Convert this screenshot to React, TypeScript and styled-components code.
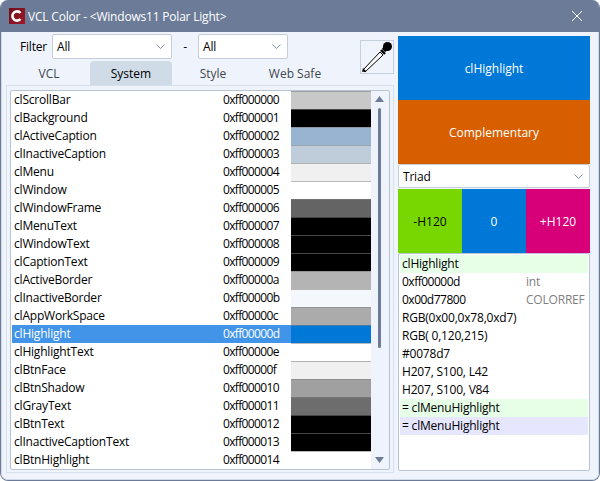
import React from "react";
import styled, { createGlobalStyle } from "styled-components";

const GlobalStyle = createGlobalStyle`
  html, body {
    margin: 0;
    padding: 0;
    background: #ffffff;
  }
  body {
    font-family: "Open Sans", "Noto Sans", sans-serif;
    font-size: 12px;
    letter-spacing: -0.2px;
    color: #000000;
  }
`;

const Window = styled.div`
  width: 600px;
  height: 481px;
  box-sizing: border-box;
  display: flex;
  flex-direction: column;
  background: #eff4fc;
  border: 1px solid #6b7b98;
  border-top: none;
  border-radius: 8px;
  overflow: hidden;
`;

const TitleBar = styled.div`
  height: 32px;
  flex: none;
  display: flex;
  align-items: center;
  padding: 0 8px;
  background: #6b7b98;
  color: #ffffff;
`;

const TitleText = styled.div`
  margin-left: 3px;
  flex: 1;
`;

const AppIcon = styled.div`
  width: 16px;
  height: 16px;
  display: flex;
  align-items: center;
  justify-content: center;
  background: linear-gradient(135deg, #6e0f1a, #a01828);
`;

const CloseIcon = styled.svg`
  width: 10px;
  height: 10px;
  margin-right: 9px;
`;

const Body = styled.div`
  flex: 1;
  min-height: 0;
  display: flex;
  gap: 4px;
  padding: 2px 8px 6px 4px;
  border: 1px solid #d0dae6;
  border-top: none;
  border-radius: 0 0 6px 6px;
`;

const LeftColumn = styled.div`
  width: 388px;
  display: flex;
  flex-direction: column;
`;

const TopArea = styled.div`
  display: flex;
  justify-content: space-between;
  height: 51px;
  flex: none;
`;

const Filters = styled.div`
  display: flex;
  flex-direction: column;
  gap: 2px;
`;

const FilterRow = styled.div`
  display: flex;
  align-items: center;
  height: 25px;
`;

const FilterLabel = styled.span`
  width: 32px;
  margin-left: 14px;
`;

const Dash = styled.span`
  width: 26px;
  text-align: center;
`;

const Select = styled.div<{ $width?: number }>`
  box-sizing: border-box;
  width: ${({ $width }) => ($width ? `${$width}px` : "100%")};
  height: ${({ $width }) => ($width ? 25 : 24)}px;
  flex: none;
  display: flex;
  align-items: center;
  justify-content: space-between;
  padding: 0 6px 0 4px;
  background: #ffffff;
  border: 1px solid #c4ceda;
  border-radius: 2px;
`;

const Tabs = styled.div`
  display: flex;
  margin-left: 2px;
`;

const Tab = styled.div<{ $active?: boolean }>`
  width: 82px;
  height: 24px;
  display: flex;
  align-items: center;
  justify-content: center;
  letter-spacing: 0;
  color: ${({ $active }) => ($active ? "#000000" : "#40464f")};
  background: ${({ $active }) => ($active ? "#cfdbe6" : "transparent")};
  border-radius: 4px 4px 0 0;
`;

const DropperButton = styled.div`
  box-sizing: border-box;
  width: 34px;
  height: 34px;
  margin-top: 6px;
  background: #eff4fc;
  border: 1px solid #c4d0dc;
`;

const ListPanel = styled.div`
  flex: 1;
  min-height: 0;
  display: flex;
  padding: 4px 3px 2px;
  border: 1px solid #d7e1ec;
`;

const ColorList = styled.div`
  flex: 1;
  display: flex;
  padding-left: 1px;
  background: #ffffff;
  border: 1px solid #b8c4d4;
  border-radius: 2px;
  overflow: hidden;
`;

const Rows = styled.div`
  width: 359px;
  flex: none;
`;

const Row = styled.div<{ $selected?: boolean }>`
  height: 18px;
  display: flex;
  padding-left: 2px;
  line-height: 17px;
  color: ${({ $selected }) => ($selected ? "#ffffff" : "#000000")};
  background: ${({ $selected }) => ($selected ? "#4294e8" : "transparent")};
`;

const RowName = styled.span`
  width: 209px;
  flex: none;
`;

const RowValue = styled.span`
  width: 68px;
  flex: none;
  letter-spacing: -0.65px;
`;

const Swatch = styled.span<{ $color: string }>`
  width: 80px;
  flex: none;
  box-sizing: border-box;
  background: ${({ $color }) => $color};
  border-top: 1px solid rgba(128, 128, 128, 0.55);
`;

const ScrollTrack = styled.div`
  flex: 1;
  display: flex;
  flex-direction: column;
  align-items: center;
  padding: 5px 1px 0 0;
  background: #eff4fc;
`;

const ScrollThumb = styled.div`
  width: 3px;
  height: 240px;
  margin: 6px 0 109px;
  border-radius: 2px;
  background: #6b7b98;
`;

const RightColumn = styled.div`
  width: 192px;
  display: flex;
  flex-direction: column;
  margin-top: 2px;
  margin-bottom: 2px;
`;

const ColorBlock = styled.div<{ $bg: string; $dark?: boolean }>`
  height: 64px;
  flex: none;
  display: flex;
  align-items: center;
  justify-content: center;
  letter-spacing: 0;
  color: ${({ $dark }) => ($dark ? "#000000" : "#ffffff")};
  background: ${({ $bg }) => $bg};
`;

const TriadRow = styled.div`
  display: flex;
  margin-top: 1px;
  & > * {
    flex: 0 0 64px;
  }
`;

const InfoList = styled.div`
  flex: 1;
  padding: 1px;
  background: #ffffff;
  border: 1px solid #b8c4d4;
  border-radius: 2px;
`;

const InfoRow = styled.div<{ $bg?: string }>`
  height: 18px;
  padding-left: 2px;
  line-height: 17px;
  display: flex;
  background: ${({ $bg }) => $bg ?? "transparent"};
`;

const InfoValue = styled.span`
  width: 124px;
  flex: none;
  letter-spacing: -0.5px;
`;

const InfoNote = styled.span`
  color: #808080;
`;

const colors: [string, string, string][] = [
  ["clScrollBar", "0xff000000", "#c8c8c8"],
  ["clBackground", "0xff000001", "#000000"],
  ["clActiveCaption", "0xff000002", "#99b4d1"],
  ["clInactiveCaption", "0xff000003", "#bfcddb"],
  ["clMenu", "0xff000004", "#f0f0f0"],
  ["clWindow", "0xff000005", "#ffffff"],
  ["clWindowFrame", "0xff000006", "#646464"],
  ["clMenuText", "0xff000007", "#000000"],
  ["clWindowText", "0xff000008", "#000000"],
  ["clCaptionText", "0xff000009", "#000000"],
  ["clActiveBorder", "0xff00000a", "#b4b4b4"],
  ["clInactiveBorder", "0xff00000b", "#f4f7fc"],
  ["clAppWorkSpace", "0xff00000c", "#ababab"],
  ["clHighlight", "0xff00000d", "#0078d7"],
  ["clHighlightText", "0xff00000e", "#ffffff"],
  ["clBtnFace", "0xff00000f", "#f0f0f0"],
  ["clBtnShadow", "0xff000010", "#a0a0a0"],
  ["clGrayText", "0xff000011", "#6d6d6d"],
  ["clBtnText", "0xff000012", "#000000"],
  ["clInactiveCaptionText", "0xff000013", "#000000"],
  ["clBtnHighlight", "0xff000014", "#ffffff"],
];

function Chevron() {
  return (
    <svg width="9" height="5" viewBox="0 0 9 5" fill="none">
      <path d="M0.5 0.5 L4.5 4.5 L8.5 0.5" stroke="#7c8aa3" strokeWidth="1" />
    </svg>
  );
}

function ScrollArrow({ down }: { down?: boolean }) {
  return (
    <svg width="9" height="6" viewBox="0 0 9 6">
      <path d={down ? "M0 0 H9 L4.5 6 Z" : "M0 6 H9 L4.5 0 Z"} fill="#6b7b98" />
    </svg>
  );
}

function Dropper() {
  return (
    <svg width="32" height="32" viewBox="0 0 32 32" shapeRendering="crispEdges">
      <path d="M2 29 L19 11 L22 14 L4 31 Z" fill="#ffffff" stroke="#000000" strokeWidth="1" shapeRendering="auto" />
      <path d="M1 31 L2 27 L5 30 Z" fill="#000000" shapeRendering="auto" />
      <path d="M20 9 L24 13" stroke="#000000" strokeWidth="2.4" shapeRendering="auto" />
      <circle cx="26.5" cy="5.5" r="4.5" fill="#000000" shapeRendering="auto" />
      <path d="M21 8 L24 3 L29 8 L24 11 Z" fill="#000000" shapeRendering="auto" />
    </svg>
  );
}

export default function App() {
  return (
    <>
      <GlobalStyle />
      <Window>
        <TitleBar>
          <AppIcon>
            <svg width="14" height="14" viewBox="0 0 14 14" fill="none">
              <path d="M10.5 4 A4.6 4.6 0 1 0 10.5 10" stroke="#ffffff" strokeWidth="2.6" />
            </svg>
          </AppIcon>
          <TitleText>VCL Color - &lt;Windows11 Polar Light&gt;</TitleText>
          <CloseIcon viewBox="0 0 10 10">
            <path d="M0 0 L10 10 M10 0 L0 10" stroke="#ffffff" strokeWidth="1" />
          </CloseIcon>
        </TitleBar>
        <Body>
          <LeftColumn>
            <TopArea>
              <Filters>
                <FilterRow>
                  <FilterLabel>Filter</FilterLabel>
                  <Select $width={120}>
                    All
                    <Chevron />
                  </Select>
                  <Dash>-</Dash>
                  <Select $width={90}>
                    All
                    <Chevron />
                  </Select>
                </FilterRow>
                <Tabs>
                  <Tab>VCL</Tab>
                  <Tab $active>System</Tab>
                  <Tab>Style</Tab>
                  <Tab>Web Safe</Tab>
                </Tabs>
              </Filters>
              <DropperButton>
                <Dropper />
              </DropperButton>
            </TopArea>
            <ListPanel>
              <ColorList>
                <Rows>
                  {colors.map(([name, value, color]) => (
                    <Row key={name} $selected={name === "clHighlight"}>
                      <RowName>{name}</RowName>
                      <RowValue>{value}</RowValue>
                      <Swatch $color={color} />
                    </Row>
                  ))}
                </Rows>
                <ScrollTrack>
                  <ScrollArrow />
                  <ScrollThumb />
                  <ScrollArrow down />
                </ScrollTrack>
              </ColorList>
            </ListPanel>
          </LeftColumn>
          <RightColumn>
            <ColorBlock $bg="#0078d7">clHighlight</ColorBlock>
            <ColorBlock $bg="#d75f00">Complementary</ColorBlock>
            <Select>
              Triad
              <Chevron />
            </Select>
            <TriadRow>
              <ColorBlock $bg="#78d700" $dark>-H120</ColorBlock>
              <ColorBlock $bg="#0078d7">0</ColorBlock>
              <ColorBlock $bg="#d70078">+H120</ColorBlock>
            </TriadRow>
            <InfoList>
              <InfoRow $bg="#e6ffe6">clHighlight</InfoRow>
              <InfoRow>
                <InfoValue>0xff00000d</InfoValue>
                <InfoNote>int</InfoNote>
              </InfoRow>
              <InfoRow>
                <InfoValue>0x00d77800</InfoValue>
                <InfoNote>COLORREF</InfoNote>
              </InfoRow>
              <InfoRow>RGB(0x00,0x78,0xd7)</InfoRow>
              <InfoRow>RGB( 0,120,215)</InfoRow>
              <InfoRow>#0078d7</InfoRow>
              <InfoRow>H207, S100, L42</InfoRow>
              <InfoRow>H207, S100, V84</InfoRow>
              <InfoRow $bg="#e6ffe6">= clMenuHighlight</InfoRow>
              <InfoRow $bg="#e6e6ff">= clMenuHighlight</InfoRow>
            </InfoList>
          </RightColumn>
        </Body>
      </Window>
    </>
  );
}
